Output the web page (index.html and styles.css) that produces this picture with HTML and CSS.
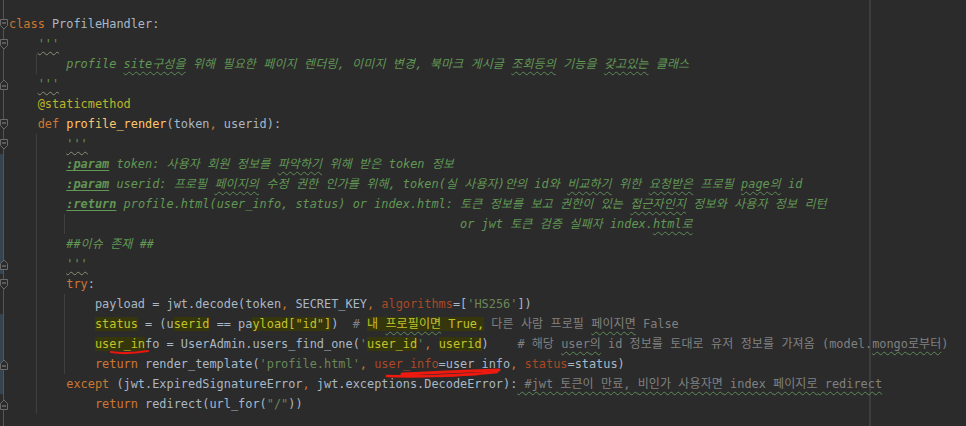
FILE: index.html
```html
<!DOCTYPE html>
<html lang="ko">
<head>
    <meta charset="UTF-8">
    <title>ProfileHandler</title>
    <link rel="stylesheet" href="styles.css">
</head>
<body>
    <svg class="defs" width="0" height="0">
        <symbol id="fold-open" viewBox="0 0 8 11">
            <path d="M0.5 0.5 H7.5 V6.5 L4 10 L0.5 6.5 Z" fill="#2b2b2b" stroke="#6b6b6b"/>
            <path d="M2 4 H6" stroke="#8a8a8a"/>
        </symbol>
        <symbol id="fold-close" viewBox="0 0 8 11">
            <path d="M0.5 10.5 H7.5 V4.5 L4 1 L0.5 4.5 Z" fill="#2b2b2b" stroke="#6b6b6b"/>
            <path d="M2 7 H6" stroke="#8a8a8a"/>
        </symbol>
    </svg>

    <div class="editor">
        <div class="ln"><i class="gut"><svg class="fold"><use href="#fold-open"/></svg></i><span class="code"><span class="kw">class</span> ProfileHandler:</span></div>
        <div class="ln"><i class="gut"><svg class="fold"><use href="#fold-open"/></svg></i><span class="code">    <span class="doc ww">'''</span></span></div>
        <div class="ln"><i class="gut"></i><span class="code">    <span class="g">    </span><span class="doc">profile <span class="ty">site<span class="k">구성을</span></span><span class="k"> 위해 필요한 페이지 렌더링, 이미지 변경, 북마크 게시글 <span class="ty">조회등의</span> 기능을 <span class="ty">갖고있는</span> 클래스</span></span></span></div>
        <div class="ln"><i class="gut"><svg class="fold"><use href="#fold-close"/></svg></i><span class="code">    <span class="doc ww">'''</span></span></div>
        <div class="ln"><i class="gut"></i><span class="code">    <span class="deco">@staticmethod</span></span></div>
        <div class="ln"><i class="gut"><svg class="fold"><use href="#fold-open"/></svg></i><span class="code">    <span class="kw">def</span> <span class="fn">profile_render</span>(token<span class="kw">,</span> userid):</span></div>
        <div class="ln"><i class="gut"><svg class="fold"><use href="#fold-open"/></svg></i><span class="code">    <span class="g">    </span><span class="doc ww">'''</span></span></div>
        <div class="ln chg"><i class="gut"></i><span class="code">    <span class="g">    </span><span class="doc"><span class="tag">:param</span> token: <span class="k">사용자 회원 정보를 <span class="ty">파악하기</span> 위해 받은 </span>token <span class="k">정보</span></span></span></div>
        <div class="ln chg"><i class="gut"></i><span class="code">    <span class="g">    </span><span class="doc"><span class="tag">:param</span> userid: <span class="k">프로필 <span class="ty">페이지의</span> 수정 권한 인가를 위해</span>, token(<span class="k">실 사용자</span>)<span class="k">안의</span> id<span class="k">와 <span class="ty">비교하기</span> 위한 <span class="ty">요청받은</span> 프로필</span> <span class="ty">page<span class="k">의</span></span> id</span></span></div>
        <div class="ln chg"><i class="gut"></i><span class="code">    <span class="g">    </span><span class="doc"><span class="tag">:return</span> profile.html(user_info, status) or index.html: <span class="k">토큰 정보를 보고 권한이 있는 <span class="ty">접근자인지</span> 정보와 사용자 정보 리턴</span></span></span></div>
        <div class="ln chg"><i class="gut"></i><span class="code">    <span class="g">    </span><span class="g">    </span>                                                   <span class="doc">or jwt <span class="k">토큰 검증 실패자</span> index.<span class="ty">html<span class="k">로</span></span></span></span></div>
        <div class="ln chg"><i class="gut"></i><span class="code">    <span class="g">    </span><span class="doc">##<span class="k">이슈 존재</span> ##</span></span></div>
        <div class="ln chg"><i class="gut"><svg class="fold"><use href="#fold-close"/></svg></i><span class="code">    <span class="g">    </span><span class="doc ww">'''</span></span></div>
        <div class="ln"><i class="gut"><svg class="fold"><use href="#fold-open"/></svg></i><span class="code">    <span class="g">    </span><span class="kw">try</span>:</span></div>
        <div class="ln"><i class="gut"></i><span class="code">    <span class="g">    </span><span class="g">    </span>payload = jwt.decode(token<span class="kw">,</span> SECRET_KEY<span class="kw">,</span> <span class="kwa">algorithms</span>=[<span class="str">'HS256'</span>])</span></div>
        <div class="ln chg"><i class="gut"></i><span class="code">    <span class="g">    </span><span class="g">    </span><span class="hl">status</span> = (u<span class="hl">serid</span> == pa<span class="hl">yload[<span class="str">"id"</span>]</span>)  <span class="cm"># <span class="hl"><span class="k">내 <span class="ty">프로필이면</span></span> True,</span> <span class="k">다른 사람 프로필 <span class="ty">페이지면</span></span> False</span></span></div>
        <div class="ln chg"><i class="gut"></i><span class="code">    <span class="g">    </span><span class="g">    </span><span class="hl">user_in</span>fo = UserAdmin.users_find_one(<span class="str">'<span class="hl">user_id</span>'</span><span class="kw">,</span> <span class="hl">userid</span>)    <span class="cm"># <span class="k">해당</span> <span class="ty">user<span class="k">의</span></span> id <span class="k">정보를 토대로 유저 정보를 가져옴</span> (model.<span class="ty">mongo<span class="k">로부터</span></span>)</span></span></div>
        <div class="ln chg"><i class="gut"><svg class="fold"><use href="#fold-close"/></svg></i><span class="code">    <span class="g">    </span><span class="g">    </span><span class="kw">return</span> render_template(<span class="str">'profile.html'</span><span class="kw">,</span> <span class="kwa">user_info</span>=user_info<span class="kw">,</span> <span class="kwa">status</span>=status)</span></div>
        <div class="ln chg"><i class="gut"></i><span class="code">    <span class="g">    </span><span class="kw">except</span> (jwt.ExpiredSignatureError<span class="kw">,</span> jwt.exceptions.DecodeError):<span class="cm ty"> #jwt <span class="k">토큰이 만료</span>, <span class="k">비인가 사용자면</span> index <span class="k">페이지로</span> redirect</span></span></div>
        <div class="ln"><i class="gut"><svg class="fold"><use href="#fold-close"/></svg></i><span class="code">    <span class="g">    </span>    <span class="kw">return</span> redirect(url_for(<span class="str">"/"</span>))</span></div>

        <!-- red pen marks drawn over the screenshot -->
        <svg class="marks" width="966" height="426" viewBox="0 0 966 426">
            <path d="M111 352 Q126 354.5 148 351" fill="none" stroke="#e8160f" stroke-width="2.2" stroke-linecap="round"/>
            <path d="M387 376 C415 377 445 376 478 374" fill="none" stroke="#ee1a10" stroke-width="2.6" stroke-linecap="round"/>
            <path d="M402 374 C430 373 460 371 499 370" fill="none" stroke="#ee1a10" stroke-width="3" stroke-linecap="round"/>
            <path d="M440 376 C460 375 480 374 497 372" fill="none" stroke="#ee1a10" stroke-width="2.4" stroke-linecap="round"/>
        </svg>
    </div>
</body>
</html>
```

FILE: styles.css
```css
* {
    margin: 0;
    padding: 0;
    box-sizing: border-box;
}

body {
    background: #2b2b2b;
    color: #a9b7c6;
    font-family: "DejaVu Sans Mono", "Noto Sans CJK KR", monospace;
    font-size: 11.9px;
    height: 426px;
    overflow: hidden;
}

.defs {
    position: absolute;
}

.editor {
    position: relative;
    min-height: 426px;
    padding-top: 14px;
    background:
        linear-gradient(#555, #555) 3px 0 / 1px 100% no-repeat,
        linear-gradient(#3d3d3d, #3d3d3d) 869px 0 / 2px 100% no-repeat;
}

.ln {
    display: flex;
    height: 20px;
    line-height: 20px;
}

.gut {
    flex: none;
    width: 9px;
    display: flex;
    align-items: center;
}

.ln.chg .gut {
    box-shadow: inset 3px 0 #36444f;
}

.fold {
    width: 8px;
    height: 11px;
}

.code {
    white-space: pre;
}

/* indent guide */
.g {
    display: inline-block;
    height: 20px;
    vertical-align: top;
    margin-left: -2px;
    padding-left: 2px;
    box-shadow: inset 1px 0 #3f3f3f;
}

.k {
    font-size: 12px;
    letter-spacing: 0.1px;
}

.kw { color: #cc7832; }
.fn { color: #ffc66d; }
.deco { color: #bbb529; }
.str { color: #6a8759; }
.kwa { color: #aa4926; }
.cm { color: #808080; }

.doc {
    color: #629755;
    font-style: italic;
}

.tag {
    font-weight: bold;
    text-decoration: underline;
    text-underline-offset: 2px;
}

.ty {
    text-decoration: underline wavy #5f8a5a;
    text-decoration-thickness: 1px;
    text-underline-offset: 3px;
}

.ww {
    text-decoration: underline wavy #8d8f78;
    text-decoration-thickness: 1px;
    text-underline-offset: 3px;
}

.hl,
.hl * {
    background: #36360c;
    color: #c4c22c;
}

.marks {
    position: absolute;
    top: 0;
    left: 0;
    pointer-events: none;
}
```
